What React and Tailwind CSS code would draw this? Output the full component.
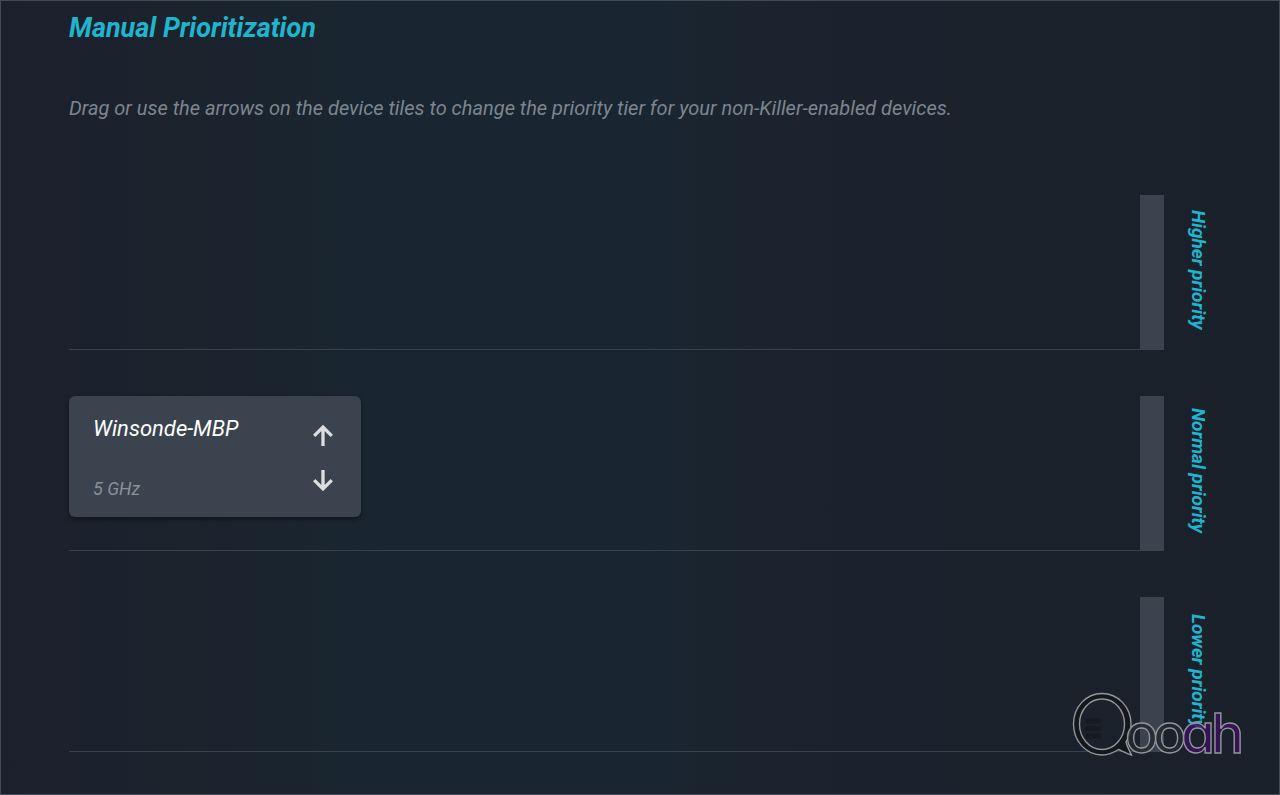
import clsx from "clsx";

const tiers = [
	{ id: "higher", label: "Higher priority", devices: [] },
	{ id: "normal", label: "Normal priority", devices: [{ name: "Winsonde-MBP", band: "5 GHz" }] },
	{ id: "lower", label: "Lower priority", devices: [] },
];

const Arrow = ({ down }) => (
	<svg
		viewBox="0 0 22 22"
		className={clsx("h-[22px] w-[22px]", down && "rotate-180")}
		fill="none"
		stroke="currentColor"
		strokeWidth="3.3"
		aria-hidden="true"
	>
		<path d="M11 22V2.500M2.200 11.800L11 3L19.800 11.800" />
	</svg>
);

const DeviceTile = ({ device }) => (
	<div className="flex w-[292px] justify-between rounded-md bg-[#3a434e] pt-[17px] pb-4 pr-[22px] pl-6 shadow-[0_2px_5px_rgba(0,0,0,0.45)]">
		<div className="flex flex-col justify-between">
			<span className="text-[22px] leading-8 text-white">{device.name}</span>
			<span className="text-lg leading-6 text-[#88909a]">{device.band}</span>
		</div>
		<div className="flex flex-col gap-3.5 pt-1.5 pb-1 text-[#dcdee0]">
			<button type="button" aria-label="Raise priority" className="flex h-8 w-8 items-center justify-center">
				<Arrow />
			</button>
			<button type="button" aria-label="Lower priority" className="flex h-8 w-8 items-center justify-center">
				<Arrow down />
			</button>
		</div>
	</div>
);

const Tier = ({ tier }) => (
	<section className="flex h-[155px] items-stretch">
		<div className="flex flex-1 items-start border-b border-[#36414d]">
			{tier.devices.map((device) => (
				<DeviceTile key={device.name} device={device} />
			))}
		</div>
		<div className="w-6 bg-[#3a434e]" />
		<h2 className="ml-5 flex w-7 items-center justify-center pb-1.5 text-[19px] leading-7 font-bold whitespace-nowrap text-[#1fb5ce] [writing-mode:vertical-rl]">
			{tier.label}
		</h2>
	</section>
);

const Logo = () => (
	<svg viewBox="0 0 180 84" className="h-[84px] w-[180px]" role="img" aria-label="Qooah">
		<path
			fill="#14171c"
			stroke="#92969b"
			strokeWidth="1.4"
			fillRule="evenodd"
			d="M31 3.5C47 3.500 60 17 60 34C60 41 58 47 55 52C56 56 58 60 60.500 65C56 63.500 51 61 47.500 59.500C43 62.500 37 65 31 65C15 65 2.500 51 2.500 34C2.500 17 15 3.500 31 3.500ZM31 9C18.500 9 8.500 20 8.500 34C8.500 48 18.500 59.500 31 59.500C43.500 59.500 53.500 48 53.500 34C53.500 20 43.500 9 31 9Z"
		/>
		<path d="M15 31H30M15 38.500H30M15 46H30" stroke="#171b21" strokeWidth="5" />
		<g
			className="font-['Inter',sans-serif] [font-feature-settings:'cv11']"
			fontSize="55"
			fontWeight="500"
			fontStyle="normal"
			fillOpacity="0.8"
			stroke="#92969b"
			strokeWidth="1.4"
		>
			<text x="54 82" y="63" fill="#24282f">oo</text>
			<text x="110 140" y="63" fill="#3d1063">ah</text>
		</g>
	</svg>
);

const App = () => (
	<main className="relative min-h-screen border border-[#414a55] bg-[linear-gradient(to_right,#1c202c,#1b232d_15%,#192631_30%,#192631_50%,#1c222d_65%,#1b212a)] pt-2 pr-[67px] pb-[42px] pl-[68px] font-['Roboto',sans-serif] italic">
		<h1 className="text-[27px] leading-[38px] font-bold text-[#1fb5ce]">Manual Prioritization</h1>
		<p className="mt-[47px] text-xl leading-7 text-[#7d858f]">
			Drag or use the arrows on the device tiles to change the priority tier for your non-Killer-enabled devices.
		</p>
		<div className="mt-[73px] flex flex-col gap-[46px]">
			{tiers.map((tier) => (
				<Tier key={tier.id} tier={tier} />
			))}
		</div>
		<div className="absolute right-7 bottom-5">
			<Logo />
		</div>
	</main>
);

export default App;
